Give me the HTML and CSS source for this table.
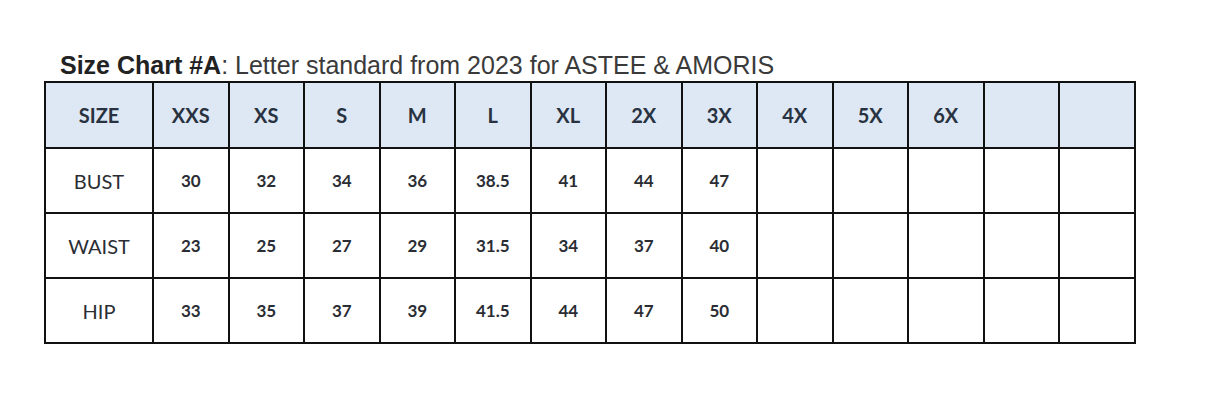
FILE: index.html
```html
<!DOCTYPE html>
<html lang="en">

<head>
  <meta charset="UTF-8">
  <meta name="viewport" content="width=device-width, initial-scale=1.0">
  <title>Size Chart #A</title>
  <link rel="stylesheet" href="styles.css">
</head>

<body>
  <div class="sheet">
    <h1 class="title"><b>Size Chart #A</b>: Letter standard from 2023 for ASTEE &amp; AMORIS</h1>

    <table class="chart">
      <colgroup>
        <col class="first">
        <col span="13" class="size">
      </colgroup>
      <thead>
        <tr>
          <th>SIZE</th>
          <th>XXS</th>
          <th>XS</th>
          <th>S</th>
          <th>M</th>
          <th>L</th>
          <th>XL</th>
          <th>2X</th>
          <th>3X</th>
          <th>4X</th>
          <th>5X</th>
          <th>6X</th>
          <th></th>
          <th></th>
        </tr>
      </thead>
      <tbody>
        <tr>
          <td class="label">BUST</td>
          <td>30</td>
          <td>32</td>
          <td>34</td>
          <td>36</td>
          <td>38.5</td>
          <td>41</td>
          <td>44</td>
          <td>47</td>
          <td></td>
          <td></td>
          <td></td>
          <td></td>
          <td></td>
        </tr>
        <tr>
          <td class="label">WAIST</td>
          <td>23</td>
          <td>25</td>
          <td>27</td>
          <td>29</td>
          <td>31.5</td>
          <td>34</td>
          <td>37</td>
          <td>40</td>
          <td></td>
          <td></td>
          <td></td>
          <td></td>
          <td></td>
        </tr>
        <tr>
          <td class="label">HIP</td>
          <td>33</td>
          <td>35</td>
          <td>37</td>
          <td>39</td>
          <td>41.5</td>
          <td>44</td>
          <td>47</td>
          <td>50</td>
          <td></td>
          <td></td>
          <td></td>
          <td></td>
          <td></td>
        </tr>
      </tbody>
    </table>
  </div>
</body>

</html>
```

FILE: styles.css
```css
body {
  margin: 0;
  background: #fff;
}

.sheet {
  padding: 53px 0 0 44px;
}

.title {
  margin: 0 0 4px 16px;
  font-family: "Liberation Sans", Arial, sans-serif;
  font-size: 25px;
  line-height: 24px;
  font-weight: normal;
  color: #3a3a3a;
}

.title b {
  color: #222;
}

.chart {
  border-collapse: collapse;
  table-layout: fixed;
  width: 1090px;
  font-family: Lato, "Open Sans", sans-serif;
  color: #1e2228;
}

.chart .first {
  width: 108px;
}

.chart .size {
  width: 75.5px;
}

.chart th,
.chart td {
  border: 2px solid #111;
  padding: 0;
  text-align: center;
}

.chart th {
  height: 64px;
  background-color: #dde8f4;
  font-size: 20px;
  font-weight: bold;
  color: #283240;
}

.chart td {
  height: 63px;
  font-size: 17px;
  font-weight: bold;
  color: #2a2d33;
}

.chart td.label {
  font-size: 20px;
  font-weight: normal;
}
```
